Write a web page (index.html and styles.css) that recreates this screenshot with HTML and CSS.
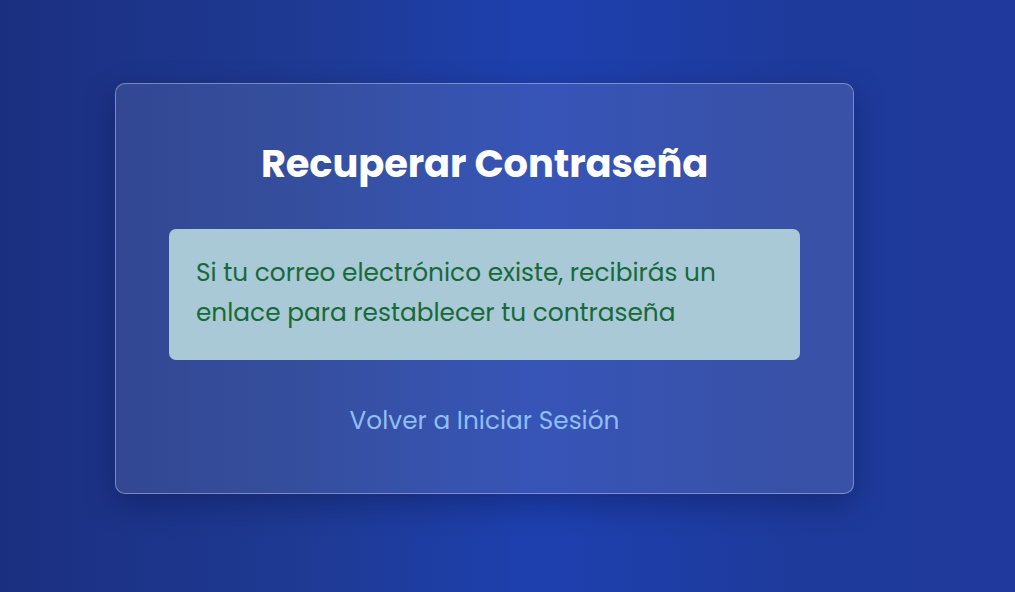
FILE: index.html
```html
<!DOCTYPE html>
<html lang="es">
<head>
<meta charset="utf-8">
<title>Recuperar Contraseña</title>
<link rel="stylesheet" href="styles.css">
</head>
<body>
<main class="page">
  <section class="card">
    <h1 class="title">Recuperar Contraseña</h1>
    <div class="alert">Si tu correo electrónico existe, recibirás un enlace para restablecer tu contraseña</div>
    <a class="back-link" href="#">Volver a Iniciar Sesión</a>
  </section>
</main>
</body>
</html>
```

FILE: styles.css
```css
* { box-sizing: border-box; }
html, body { margin: 0; height: 100%; }
body {
  font-family: "Poppins", "Open Sans", "Liberation Sans", sans-serif;
  background: linear-gradient(90deg, #1b2f80 0%, #1e3a93 30%, #1e40af 53%, #1e3a9a 80%, #1f3a9c 100%);
  overflow: hidden;
}
.page {
  padding: 83px 0 0 115px;
}
.card {
  width: 739px;
  height: 411px;
  border: 1px solid rgba(255, 255, 255, 0.35);
  border-radius: 10px;
  background: linear-gradient(90deg, rgba(255,255,255,0.10), rgba(255,255,255,0.12));
  box-shadow: 0 10px 30px rgba(5, 15, 60, 0.35);
  padding: 57px 53px 0 53px;
  display: flex;
  flex-direction: column;
  align-items: stretch;
}
.title {
  margin: 0;
  font-size: 38.4px;
  line-height: 46px;
  font-weight: 700;
  color: #ffffff;
  text-align: center;
  letter-spacing: -0.1px;
}
.alert {
  margin-top: 42px;
  height: 131px;
  border-radius: 7px;
  background: #a9c9d6;
  color: #17693a;
  font-size: 24.8px;
  line-height: 40px;
  padding: 24px 40px 0 27px;
}
.back-link {
  margin-top: 43px;
  align-self: center;
  color: #8fbdf8;
  font-size: 24.8px;
  line-height: 36px;
  text-decoration: none;
}
```
